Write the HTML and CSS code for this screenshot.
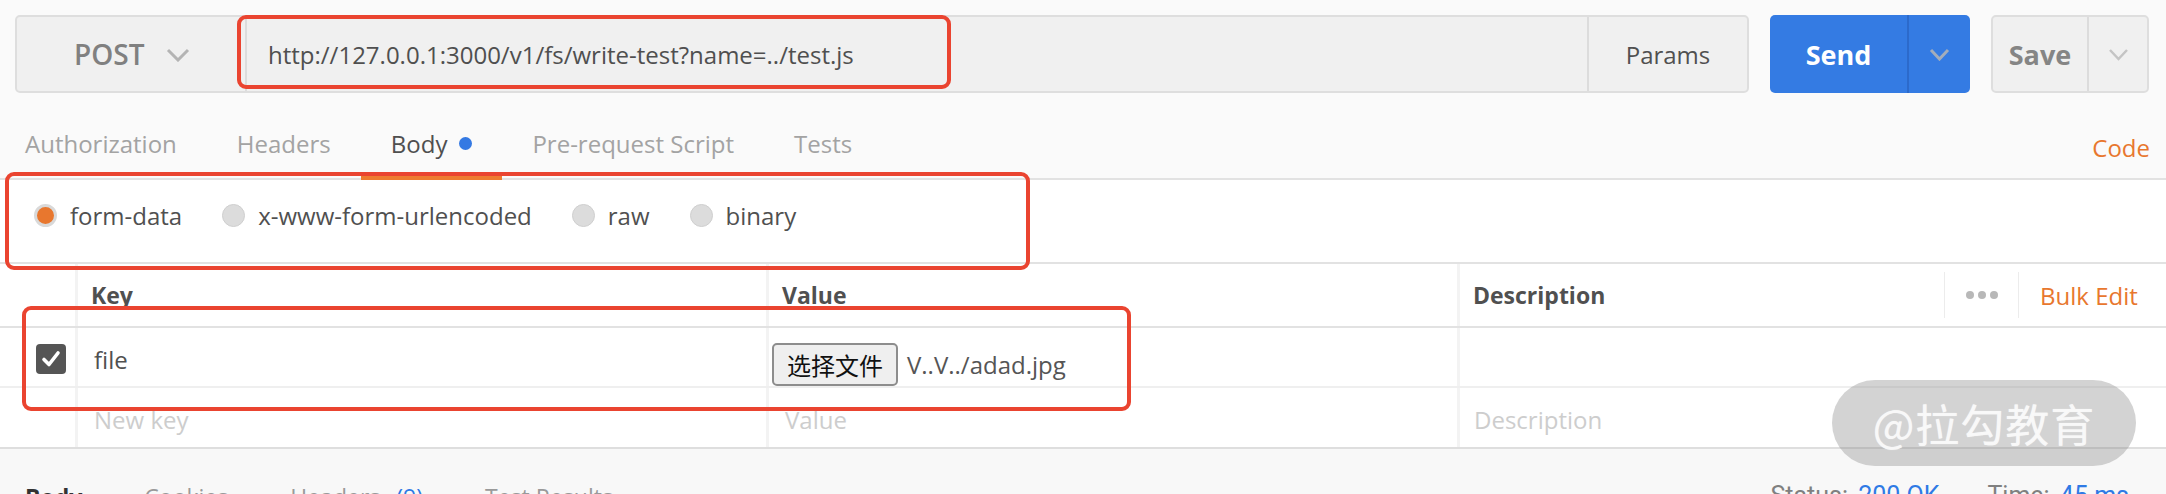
FILE: index.html
```html
<!DOCTYPE html>
<html>
<head>
<meta charset="utf-8">
<link rel="stylesheet" href="styles.css">
</head>
<body>
<div class="app">
  <div class="request-bar">
    <div class="url-group">
      <div class="method">
        <span>POST</span>
        <svg class="chev" width="24" height="14" viewBox="0 0 24 14"><polyline points="2,2 12,12 22,2" fill="none" stroke="#b4b4b4" stroke-width="3"/></svg>
      </div>
      <div class="url">http://127.0.0.1:3000/v1/fs/write-test?name=../test.js</div>
      <div class="params">Params</div>
    </div>
    <div class="send">
      <div class="send-main">Send</div>
      <div class="send-more"><svg width="21" height="13" viewBox="0 0 21 13"><polyline points="2,2 10.5,11 19,2" fill="none" stroke="#a3adbb" stroke-width="3"/></svg></div>
    </div>
    <div class="save">
      <div class="save-main">Save</div>
      <div class="save-more"><svg width="21" height="13" viewBox="0 0 21 13"><polyline points="2,2 10.5,11 19,2" fill="none" stroke="#c4c4c4" stroke-width="2.5"/></svg></div>
    </div>
  </div>

  <div class="tabs">
    <div class="tab-list">
      <div class="tab">Authorization</div>
      <div class="tab">Headers</div>
      <div class="tab active">Body <span class="dot"></span></div>
      <div class="tab">Pre-request Script</div>
      <div class="tab">Tests</div>
    </div>
    <div class="code">Code</div>
  </div>

  <div class="body-types">
    <label class="radio"><span class="radio-dot checked"></span>form-data</label>
    <label class="radio"><span class="radio-dot"></span>x-www-form-urlencoded</label>
    <label class="radio"><span class="radio-dot"></span>raw</label>
    <label class="radio"><span class="radio-dot"></span>binary</label>
  </div>

  <div class="kv">
    <div class="kv-head">
      <div class="cell cb-cell"></div>
      <div class="cell">Key</div>
      <div class="cell">Value</div>
      <div class="cell">Description</div>
      <div class="cell plain dots-cell"><span class="sep"><svg width="34" height="10" viewBox="0 0 34 10"><circle cx="5" cy="5" r="4" fill="#b8b8b8"/><circle cx="17" cy="5" r="4" fill="#b8b8b8"/><circle cx="29" cy="5" r="4" fill="#b8b8b8"/></svg></span></div>
      <div class="cell plain bulk-cell"><span class="sep bulk">Bulk Edit</span></div>
    </div>
    <div class="kv-row row-file">
      <div class="cell cb-cell">
        <span class="checkbox"><svg width="20" height="18" viewBox="0 0 20 18"><polyline points="3,9.5 8,14.5 17,3" fill="none" stroke="#fff" stroke-width="3.6" stroke-linecap="round" stroke-linejoin="round"/></svg></span>
      </div>
      <div class="cell key-cell">file</div>
      <div class="cell value-cell"><span class="file-btn">选择文件</span><span class="file-name">V..V../adad.jpg</span></div>
      <div class="cell"></div>
    </div>
    <div class="kv-row row-new">
      <div class="cell cb-cell"></div>
      <div class="cell key-cell ph">New key</div>
      <div class="cell value-cell ph">Value</div>
      <div class="cell desc-cell ph">Description</div>
    </div>
  </div>

  <div class="response-bar">
    <div class="resp-tabs">
      <span class="resp-tab active">Body</span>
      <span class="resp-tab">Cookies</span>
      <span class="resp-tab">Headers <span class="blue">(9)</span></span>
      <span class="resp-tab">Test Results</span>
    </div>
    <div class="resp-status">
      <span>Status: <span class="blue">200 OK</span></span>
      <span>Time: <span class="blue">45 ms</span></span>
    </div>
  </div>

  <div class="annot annot-url"></div>
  <div class="annot annot-body"></div>
  <div class="annot annot-row"></div>

  <div class="watermark">@拉勾教育</div>
</div>
</body>
</html>
```

FILE: styles.css
```css
* { box-sizing: border-box; }

html, body {
  margin: 0;
  padding: 0;
}

body {
  background: #fafafa;
  font-family: "Open Sans", "Noto Sans CJK SC", sans-serif;
  width: 2166px;
  height: 494px;
  overflow: hidden;
}

.app {
  position: relative;
  width: 2166px;
  height: 494px;
  overflow: hidden;
}

/* request bar */
.request-bar {
  display: flex;
  gap: 21px;
  padding: 15px 17px 0 15px;
  height: 93px;
}

.url-group {
  flex: 0 0 1734px;
  display: flex;
  height: 78px;
  border: 2px solid #dedede;
  border-radius: 5px;
  background: #f0f0f0;
}

.method {
  width: 230px;
  display: flex;
  align-items: center;
  gap: 22px;
  padding-left: 57px;
  border-right: 2px solid #dcdcdc;
  font-size: 28px;
  font-weight: 600;
  color: #808080;
}

.method .chev { margin-top: 2px; }

.url {
  flex: 1;
  display: flex;
  align-items: center;
  padding-left: 21px;
  font-size: 24px;
  color: #4f4f4f;
}

.params {
  width: 160px;
  border-left: 2px solid #dcdcdc;
  display: flex;
  align-items: center;
  justify-content: center;
  font-size: 24px;
  color: #505050;
}

.send {
  width: 200px;
  height: 78px;
  display: flex;
  background: #347be3;
  border-radius: 5px;
  overflow: hidden;
}

.send-main {
  width: 139px;
  display: flex;
  align-items: center;
  justify-content: center;
  color: #fff;
  font-size: 27px;
  font-weight: 700;
  border-right: 2px solid #2c6acb;
}

.send-more, .save-more {
  flex: 1;
  display: flex;
  align-items: center;
  justify-content: center;
}

.save {
  width: 158px;
  height: 78px;
  display: flex;
  background: #f0f0f0;
  border: 2px solid #dedede;
  border-radius: 5px;
}

.save-main {
  width: 96px;
  display: flex;
  align-items: center;
  justify-content: center;
  color: #858585;
  font-size: 27px;
  font-weight: 700;
  border-right: 2px solid #dcdcdc;
}

/* tabs */
.tabs {
  display: flex;
  justify-content: space-between;
  align-items: flex-end;
  height: 87px;
  border-bottom: 2px solid #e2e2e2;
}

.tab-list {
  display: flex;
  margin-left: -5px;
}

.tab {
  display: flex;
  align-items: center;
  gap: 12px;
  height: 70px;
  padding: 0 30px;
  margin-bottom: -2px;
  border-bottom: 4px solid transparent;
  font-size: 24px;
  color: #a3a3a3;
}

.tab.active {
  color: #4f4f4f;
  border-bottom-color: #ee7b30;
}

.dot {
  width: 13px;
  height: 13px;
  border-radius: 50%;
  background: #3479e3;
}

.code {
  display: flex;
  align-items: center;
  height: 66px;
  padding: 4px 16px 0 0;
  font-size: 24px;
  color: #e8772e;
}

/* body types */
.body-types {
  display: flex;
  align-items: center;
  gap: 40px;
  height: 84px;
  padding: 0 0 12px 34px;
  background: #fff;
  border-bottom: 2px solid #e2e2e2;
}

.radio {
  display: flex;
  align-items: center;
  gap: 13px;
  font-size: 24px;
  color: #505050;
}

.radio-dot {
  width: 23px;
  height: 23px;
  border-radius: 50%;
  background: #dcdcdc;
  border: 1px solid #cfcfcf;
}

.radio-dot.checked {
  background: #e8772e;
  border: 3px solid #d9d9d9;
}

/* key-value table */
.kv { background: #fff; }

.kv-head, .kv-row {
  display: grid;
  grid-template-columns: 75px 691px 691px 487px 74px 148px;
}

.kv-head {
  height: 64px;
  border-bottom: 2px solid #e2e2e2;
  font-size: 23px;
  font-weight: 700;
  color: #505050;
}

.kv-row {
  grid-template-columns: 75px 691px 691px 1fr;
  font-size: 24px;
  color: #505050;
}

.cell {
  display: flex;
  align-items: center;
  padding-left: 13px;
  border-left: 3px solid #f3f3f3;
}

.cb-cell {
  border-left: none;
  padding-left: 36px;
}

.cell.plain {
  border-left: none;
  padding-left: 0;
}

.sep {
  display: flex;
  align-items: center;
  height: 46px;
  border-left: 1px solid #ececec;
}

.dots-cell .sep {
  width: 100%;
  justify-content: center;
}

.bulk-cell .sep {
  width: 100%;
  padding-left: 21px;
  color: #e8772e;
  font-weight: 400;
  font-size: 24px;
}

.row-file {
  height: 60px;
  border-bottom: 2px solid #efefef;
}

.row-file .cb-cell { padding-top: 4px; }

.checkbox {
  width: 30px;
  height: 30px;
  border-radius: 4px;
  background: #555;
  display: flex;
  align-items: center;
  justify-content: center;
}

.key-cell { padding-left: 16px; padding-top: 4px; }

.row-file .value-cell {
  padding-left: 3px;
  align-items: flex-start;
  padding-top: 15px;
}

.file-btn {
  height: 43px;
  padding: 0 13px;
  display: flex;
  align-items: center;
  border: 2px solid #8d8d8d;
  border-radius: 5px;
  background: #efefef;
  color: #111;
  font-family: "Noto Sans CJK SC", sans-serif;
  font-size: 24px;
}

.file-name {
  margin-left: 9px;
  height: 43px;
  display: flex;
  align-items: center;
  color: #555;
}

.row-new {
  height: 59px;
}

.row-new .cell { padding-top: 4px; }
.row-new .value-cell { padding-left: 16px; }
.row-new .desc-cell { padding-left: 14px; }

.ph { color: #cdcdcd; }

/* response bar */
.response-bar {
  display: flex;
  justify-content: space-between;
  height: 60px;
  padding: 32px 37px 0 25px;
  background: #f8f8f8;
  border-top: 2px solid #dedede;
}

.resp-tabs {
  display: flex;
  gap: 62px;
  font-size: 23px;
  color: #9a9a9a;
}

.resp-tab.active { color: #333; font-weight: 700; }

.resp-tab .blue { margin-left: 10px; }

.resp-status {
  display: flex;
  gap: 48px;
  font-family: Roboto, "Open Sans", sans-serif;
  font-size: 25px;
  color: #808080;
}

.resp-status .blue { margin-left: 4px; }

.blue { color: #2f7ae5; }

/* annotations */
.annot {
  position: absolute;
  border: 4px solid #ea4430;
  border-radius: 9px;
}

.annot-url { left: 237px; top: 15px; width: 714px; height: 74px; }
.annot-body { left: 5px; top: 172px; width: 1025px; height: 98px; }
.annot-row { left: 22px; top: 306px; width: 1109px; height: 105px; }

.watermark {
  position: absolute;
  left: 1832px;
  top: 380px;
  width: 304px;
  height: 86px;
  border-radius: 43px;
  background: rgba(140, 140, 140, 0.38);
  display: flex;
  align-items: center;
  justify-content: center;
  color: rgba(250, 250, 250, 0.9);
  font-family: "Noto Sans CJK SC", sans-serif;
  font-size: 44px;
  letter-spacing: 1px;
  text-shadow: 0 0 1px rgba(255, 255, 255, 0.7);
}
```
